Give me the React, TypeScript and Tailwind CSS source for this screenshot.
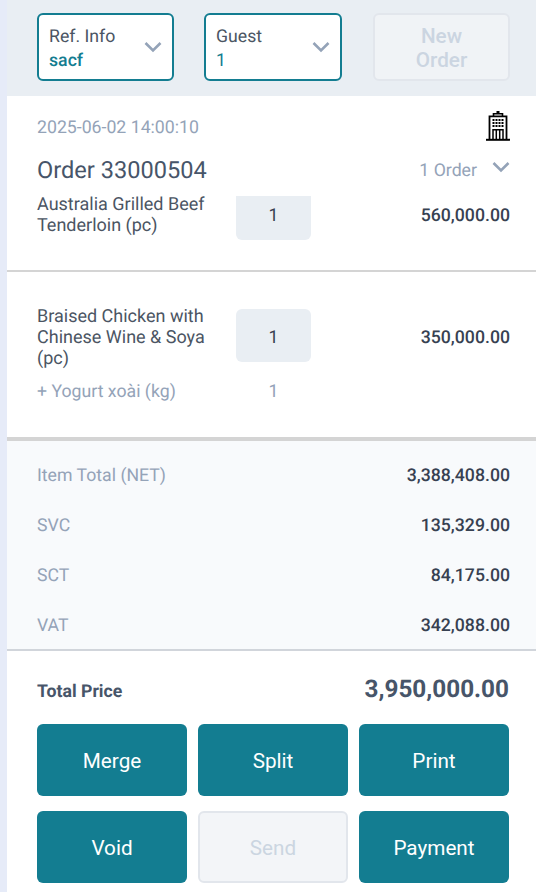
import React from "react";

function Chevron({ className }: { className?: string }) {
  return (
    <svg viewBox="0 0 18 12" className={className} fill="none" stroke="currentColor" strokeWidth="2.6" aria-hidden="true">
      <path d="M1.5 2 L9 9.5 L16.5 2" />
    </svg>
  );
}

function Building() {
  const dots: React.ReactNode[] = [];
  [8, 11, 14].forEach((y) =>
    [6.5, 9.5, 12.5, 15.5].forEach((x) => dots.push(<rect key={`${x}-${y}`} x={x} y={y} width="2" height="2" />))
  );
  return (
    <svg viewBox="0 0 24 30" className="h-[30px] w-[24px]" aria-hidden="true">
      <path d="M10.5 0h3v3h-3z" fill="#000" />
      <path d="M7.5 5.5V2.8h9v2.7" fill="none" stroke="#000" strokeWidth="1.6" />
      <path d="M3.5 28V5.3h17V28" fill="none" stroke="#000" strokeWidth="1.8" />
      <g fill="#000">{dots}</g>
      <path d="M7 28v-9.2h10V28M10.3 19v9M13.7 19v9" fill="none" stroke="#000" strokeWidth="1.5" />
      <path d="M0 28.8h24" stroke="#000" strokeWidth="2" />
    </svg>
  );
}

function Select({ label, value, bold }: { label: string; value: string; bold?: boolean }) {
  return (
    <div className="flex h-[68px] items-center justify-between rounded-md border-2 border-[#137d91] bg-white pl-[10px] pr-[10px]">
      <div className="flex flex-col pt-[3px]">
        <span className="text-[17.7px] leading-[24px] text-[#4b5563]">{label}</span>
        <span className={`text-[17.7px] leading-[24px] text-[#137d91] ${bold ? "font-medium" : ""}`}>{value}</span>
      </div>
      <Chevron className="h-[12px] w-[18px] text-[#94a3b8]" />
    </div>
  );
}

function Qty() {
  return (
    <div className="flex h-[53px] w-[75px] shrink-0 items-center justify-center rounded-md bg-[#e9eef3] pt-[5px] text-[17.7px] text-[#374151]">
      1
    </div>
  );
}

function SummaryRow({ label, value }: { label: string; value: string }) {
  return (
    <div className="flex h-[50px] items-center justify-between pt-[2px]">
      <span className="text-[17.7px] text-[#94a3b8]">{label}</span>
      <span className="text-[17.7px] font-medium text-[#374151]">{value}</span>
    </div>
  );
}

function ActionButton({ label, disabled }: { label: string; disabled?: boolean }) {
  return disabled ? (
    <button className="h-[72px] rounded-md border-2 border-[#e2e6ec] bg-[#f3f5f8] pt-[4px] text-[20.7px] text-[#cbd5e1]">{label}</button>
  ) : (
    <button className="h-[72px] rounded-md bg-[#137d91] pt-[4px] text-[20.7px] text-white">{label}</button>
  );
}

export default function App() {
  return (
    <div className="h-[892px] w-[536px] overflow-hidden bg-[#e6ebf8] pl-[7px] font-['Roboto',sans-serif] [text-rendering:geometricPrecision]">
      <div className="flex h-full flex-col bg-white">
        <header className="grid h-[96px] shrink-0 grid-cols-[137px_138px_138px] items-start gap-x-[30px] bg-[#e9eef3] pl-[30px] pr-[26px] pt-[13px]">
          <Select label="Ref. Info" value="sacf" bold />
          <Select label="Guest" value="1" />
          <button className="ml-[1px] h-[68px] rounded-md border-2 border-[#e2e6ec] bg-[#f0f3f6] pt-[1px] text-[20.7px] font-medium leading-[24px] text-[#cbd5e1]">
            New
            <br />
            Order
          </button>
        </header>

        <section className="h-[100px] shrink-0 pl-[30px] pr-[26px] pt-[15px]">
          <div className="flex h-[30px] items-center justify-between">
            <span className="mt-[4px] text-[17.7px] text-[#94a3b8]">2025-06-02 14:00:10</span>
            <Building />
          </div>
          <div className="mt-[14px] flex h-[30px] items-center justify-between">
            <span className="mt-[2px] text-[23.6px] text-[#475569]">Order 33000504</span>
            <div className="flex items-center gap-[15px]">
              <span className="mt-[2px] text-[17.7px] text-[#94a3b8]">1 Order</span>
              <Chevron className="mb-[5px] h-[12px] w-[18px] text-[#94a3b8]" />
            </div>
          </div>
        </section>

        <section className="h-[241px] shrink-0 overflow-hidden">
          <div className="-mt-[9px]">
            <div className="flex h-[85px] items-start border-b-2 border-[#d4d4d4] pl-[30px] pr-[26px]">
              <div className="flex h-[53px] w-[199px] shrink-0 items-center pt-[3px] text-[18px] leading-[21px] text-[#4b5563]">
                <span>
                  Australia Grilled Beef
                  <br />
                  Tenderloin (pc)
                </span>
              </div>
              <Qty />
              <div className="flex h-[53px] flex-1 items-center justify-end pt-[5px] text-[17.7px] font-medium text-[#374151]">560,000.00</div>
            </div>
            <div className="pl-[30px] pr-[26px] pt-[32px]">
              <div className="flex h-[63px] items-center">
                <div className="h-[63px] w-[199px] shrink-0 pt-[2px] text-[18px] leading-[21px] text-[#4b5563]">
                  Braised Chicken with
                  <br />
                  Chinese Wine &amp; Soya
                  <br />
                  (pc)
                </div>
                <Qty />
                <div className="flex-1 pt-[6px] text-right text-[17.7px] font-medium text-[#374151]">350,000.00</div>
              </div>
              <div className="mt-[15px] flex h-[21px] items-center text-[17.7px] text-[#94a3b8]">
                <span className="w-[199px] shrink-0">+ Yogurt xoài (kg)</span>
                <span className="w-[75px] text-center">1</span>
              </div>
            </div>
          </div>
        </section>

        <section className="h-[214px] shrink-0 border-t-4 border-b-2 border-t-[#d4d4d4] border-b-[#d1d5db] bg-[#f8fafc] pl-[30px] pr-[26px] pt-[9px]">
          <SummaryRow label="Item Total (NET)" value="3,388,408.00" />
          <SummaryRow label="SVC" value="135,329.00" />
          <SummaryRow label="SCT" value="84,175.00" />
          <SummaryRow label="VAT" value="342,088.00" />
        </section>

        <section className="pl-[30px] pr-[27px]">
          <div className="flex h-[73px] items-center justify-between">
            <span className="mt-[10px] text-[17.7px] font-bold text-[#475569]">Total Price</span>
            <span className="mt-[3px] text-[24.3px] font-bold text-[#475569]">3,950,000.00</span>
          </div>
          <div className="grid grid-cols-3 gap-x-[11px] gap-y-[15px]">
            <ActionButton label="Merge" />
            <ActionButton label="Split" />
            <ActionButton label="Print" />
            <ActionButton label="Void" />
            <ActionButton label="Send" disabled />
            <ActionButton label="Payment" />
          </div>
        </section>
      </div>
    </div>
  );
}
